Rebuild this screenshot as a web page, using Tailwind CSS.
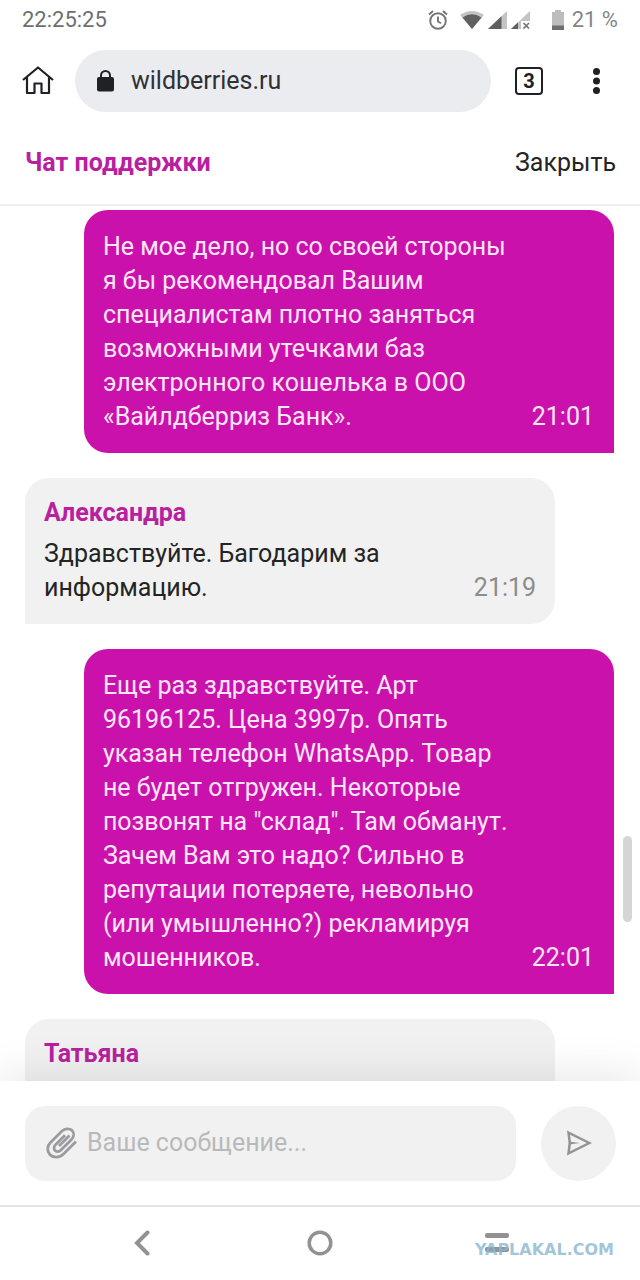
<!DOCTYPE html>
<html lang="ru">
<head>
<meta charset="utf-8">
<meta name="viewport" content="width=device-width, initial-scale=1">
<title>Чат поддержки</title>
<script src="https://cdn.jsdelivr.net/npm/@tailwindcss/browser@4"></script>
</head>
<body class="bg-white font-[Roboto,sans-serif] text-[25px] leading-[34px] text-[#242424]">
<div class="flex h-screen flex-col overflow-hidden">

  <!-- Status bar -->
  <div class="flex h-10 shrink-0 items-center justify-between px-[22px] text-[22px] leading-none text-[#6e6e6e]">
    <span>22:25:25</span>
    <div class="flex items-center">
      <svg class="mr-3 h-5 w-5" viewBox="0 0 20 20" fill="none" stroke="#757575" stroke-width="1.9" aria-hidden="true"><circle cx="10" cy="11" r="7.8"/><path d="M10 6.5V11.5L13 13.3M1 4.5L5 1M15 1L19 4.5"/></svg>
      <svg class="mr-1 h-[18px] w-6" viewBox="0 0 24 18" aria-hidden="true"><path d="M0 4Q12-4 24 4L12 18Z" fill="#c4c4c4"/><path d="M2.500 6.500Q12 0 21.500 6.500L12 18Z" fill="#606060"/></svg>
      <svg class="mr-1 h-[18px] w-[19px]" viewBox="0 0 19 18" aria-hidden="true"><path d="M0 18L19 0V18Z" fill="#c4c4c4"/><path d="M0 18L13.500 5.200V18Z" fill="#606060"/></svg>
      <svg class="mr-[22px] h-[18px] w-[19px]" viewBox="0 0 19 18" aria-hidden="true"><path d="M0 18L19 0V10H10V18Z" fill="#c4c4c4"/><path d="M0 18L7 11.300V18Z" fill="#606060"/><path d="M12.500 12L18 17.500M18 12L12.500 17.500" stroke="#757575" stroke-width="1.700"/></svg>
      <svg class="mr-2 h-5 w-3" viewBox="0 0 12 20" aria-hidden="true"><path d="M0 2H3V0H9V2H12V20H0Z" fill="#bdbdbd"/><path d="M0 15.500H12V20H0Z" fill="#6e6e6e"/></svg>
      <span class="text-[#858585]">21 %</span>
    </div>
  </div>

  <!-- Browser toolbar -->
  <div class="flex h-[82px] shrink-0 items-center pr-[30px] pl-[22px]">
    <button type="button" aria-label="Домой" class="mr-[21px]">
      <svg class="block h-8 w-8" viewBox="0 0 32 32" fill="none" stroke="#202124" stroke-width="2.200" stroke-linejoin="round" aria-hidden="true"><path d="M1 15L16 2.500L31 15M5 12V28H12.500V18.500H19.500V28H27V12"/></svg>
    </button>
    <label class="flex h-[62px] min-w-0 flex-1 items-center rounded-full bg-[#ebecf0] px-[22px]">
      <svg class="mr-4 h-[23px] w-[18px] shrink-0" viewBox="0 0 18 23" aria-hidden="true"><rect y="7" width="17" height="14.500" rx="2" fill="#202124"/><path d="M4 9V5.500a4.500 4.500 0 0 1 9 0V9" fill="none" stroke="#202124" stroke-width="2"/></svg>
      <input type="text" value="wildberries.ru" aria-label="Адрес страницы" class="w-full min-w-0 bg-transparent text-[25px] text-[#303134] outline-none">
    </label>
    <button type="button" aria-label="Вкладки: 3" class="ml-6 flex size-7 items-center justify-center rounded-sm border-2 border-[#202124] text-[20px] leading-none font-bold text-[#202124]">3</button>
    <button type="button" aria-label="Меню" class="ml-10">
      <svg class="block h-7 w-[27px]" viewBox="0 0 27 28" fill="#202124" aria-hidden="true"><circle cx="13.500" cy="4.500" r="3.500"/><circle cx="13.500" cy="14" r="3.500"/><circle cx="13.500" cy="23.500" r="3.500"/></svg>
    </button>
  </div>

  <!-- Chat header -->
  <header class="flex h-[84px] shrink-0 items-center justify-between border-b-2 border-[#efefef] pr-6 pl-[25px]">
    <h1 class="font-bold text-[#b9209f]">Чат поддержки</h1>
    <button type="button">Закрыть</button>
  </header>

  <!-- Messages -->
  <main class="relative min-h-0 flex-1 overflow-hidden pr-[26px] pl-[25px] pt-1">
    <div class="flex flex-col gap-[25px]">
      <article class="flex w-[90%] items-end self-end rounded-t-3xl rounded-bl-3xl bg-[#cb11ab] pt-5 pr-5 pb-[19px] pl-[19px] text-[#ffe6fb]">
        <p class="flex-1">Не мое дело, но со своей стороны я бы рекомендовал Вашим специалистам плотно заняться возможными утечками баз электронного кошелька в ООО «Вайлдберриз Банк».</p>
        <time class="ml-4">21:01</time>
      </article>
      <article class="w-[90%] rounded-t-3xl rounded-br-3xl bg-[#f1f1f1] px-[19px] pt-[18px] pb-[19px]">
        <h2 class="mb-[7px] font-bold text-[#b9209f]">Александра</h2>
        <div class="flex items-end">
          <p class="flex-1">Здравствуйте. Багодарим за информацию.</p>
          <time class="ml-4 text-[#8c8c8c]">21:19</time>
        </div>
      </article>
      <article class="flex w-[90%] items-end self-end rounded-t-3xl rounded-bl-3xl bg-[#cb11ab] pt-5 pr-5 pb-[19px] pl-[19px] text-[#ffe6fb]">
        <p class="flex-1">Еще раз здравствуйте. Арт 96196125. Цена 3997р. Опять указан телефон WhatsApp. Товар не будет отгружен. Некоторые позвонят на "склад". Там обманут. Зачем Вам это надо? Сильно в репутации потеряете, невольно (или умышленно?) рекламируя мошенников.</p>
        <time class="ml-4">22:01</time>
      </article>
      <article class="h-[146px] w-[90%] rounded-t-3xl rounded-br-3xl bg-[#f1f1f1] px-[19px] pt-[18px]">
        <h2 class="font-bold text-[#b9209f]">Татьяна</h2>
      </article>
    </div>
    <div class="absolute top-[72%] right-2 h-[86px] w-[9px] rounded-full bg-[#d5d5d5]"></div>
  </main>

  <!-- Message composer -->
  <form class="relative flex h-[124px] shrink-0 items-center gap-[25px] bg-white pr-6 pl-[25px] shadow-[0_0_50px_rgba(0,0,0,0.12)]">
    <div class="flex h-[75px] min-w-0 flex-1 items-center rounded-[20px] bg-[#f1f1f1] px-[21px]">
      <button type="button" aria-label="Прикрепить файл" class="mr-[9px] shrink-0">
        <svg class="block size-8" viewBox="0 0 32 32" fill="none" stroke="#9b9b9f" stroke-width="2.800" aria-hidden="true"><path d="M30 14L17.500 26.500C13.500 30.500 7 30.500 3.800 27C.8 23.700 1 18.500 4.500 15L16 3.500C19 .8 23.500 .6 26 2.900C28.500 5.500 28 9.500 25.300 12.200L15 22.500C13 24.500 10.500 24.500 9 23C7.500 21.500 7.700 19 9.500 17.200L19 7.700M23.500 8L13 18.500" transform="translate(0 .5)"/></svg>
      </button>
      <input type="text" placeholder="Ваше сообщение..." aria-label="Ваше сообщение" class="w-full min-w-0 bg-transparent outline-none placeholder:text-[#b9b9b9]">
    </div>
    <button type="submit" aria-label="Отправить" class="flex size-[75px] shrink-0 items-center justify-center rounded-full bg-[#f1f1f1]">
      <svg class="size-[26px]" viewBox="0 0 26 26" fill="#949494" fill-rule="evenodd" aria-hidden="true"><path d="M1 .5L26 13L1 25.500L2.500 13ZM4 4.800L5 11.700L14 13L5 14.300L4 21.200L20.800 13Z"/></svg>
    </button>
  </form>

  <!-- System navigation -->
  <nav class="relative flex h-[75px] shrink-0 items-center justify-center gap-[150px] border-t-2 border-[#e3e3e3] bg-white pb-1">
    <button type="button" aria-label="Назад"><svg class="block size-7" viewBox="0 0 28 28" fill="none" stroke="#929292" stroke-width="4" stroke-linecap="round" aria-hidden="true"><path d="M19.500 4.500L9 15L19.500 25.500"/></svg></button>
    <button type="button" aria-label="Главный экран"><svg class="block size-7" viewBox="0 0 28 28" fill="none" stroke="#929292" stroke-width="3.500" aria-hidden="true"><circle cx="14" cy="15" r="10.800"/></svg></button>
    <button type="button" aria-label="Недавние приложения"><svg class="block size-7" viewBox="0 0 28 28" fill="#929292" aria-hidden="true"><rect x="1" y="5" width="24" height="5" rx="2"/><rect x="1" y="19" width="24" height="5" rx="2"/></svg></button>
    <span class="absolute right-[26px] bottom-5 font-['DejaVu_Sans',sans-serif] text-[16px] leading-5 font-bold text-[#8ab5d0]/80">YAPLAKAL.COM</span>
  </nav>
</div>
</body>
</html>
